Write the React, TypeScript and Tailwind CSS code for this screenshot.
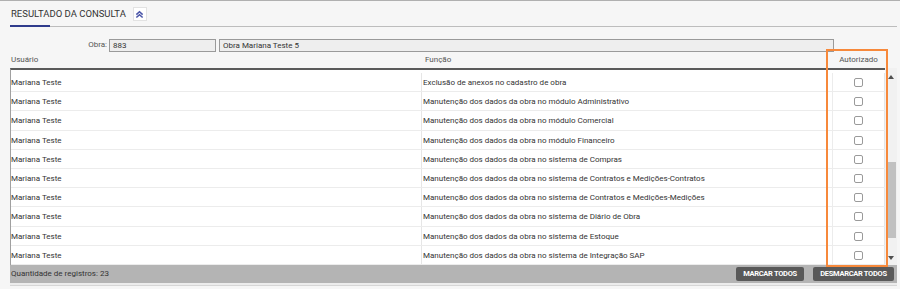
import React from "react";

const funcoes = [
  "Exclusão de anexos no cadastro de obra",
  "Manutenção dos dados da obra no módulo Administrativo",
  "Manutenção dos dados da obra no módulo Comercial",
  "Manutenção dos dados da obra no módulo Financeiro",
  "Manutenção dos dados da obra no sistema de Compras",
  "Manutenção dos dados da obra no sistema de Contratos e Medições-Contratos",
  "Manutenção dos dados da obra no sistema de Contratos e Medições-Medições",
  "Manutenção dos dados da obra no sistema de Diário de Obra",
  "Manutenção dos dados da obra no sistema de Estoque",
  "Manutenção dos dados da obra no sistema de Integração SAP",
];

export default function App() {
  return (
    <div
      className="relative w-[900px] h-[289px] overflow-hidden bg-[#f6f6f6] border-t border-[#b0b0b0] text-[#333]"
      style={{ fontFamily: "Roboto, 'Noto Sans', sans-serif" }}
    >
      {/* Title */}
      <div className="pl-[10px] pr-[3px]">
        <div className="flex items-center h-[24px] pt-[2px]">
          <span className="pl-[1px] text-[9.5px] leading-none text-[#333]">RESULTADO DA CONSULTA</span>
          <div className="ml-[7px] w-[14px] h-[14px] bg-white border border-[#e2e2e2] flex items-center justify-center">
            <svg width="9" height="9" viewBox="0 0 10 10">
              <path d="M1.5 5.2 L5 2 L8.5 5.2" stroke="#4a55a8" strokeWidth="1.7" fill="none" />
              <path d="M1.5 8.4 L5 5.2 L8.5 8.4" stroke="#4a55a8" strokeWidth="1.7" fill="none" />
            </svg>
          </div>
        </div>
        <div className="relative h-[2px] border-b border-[#bdbdbd]">
          <div className="absolute left-0 top-0 w-[40px] h-[2px] bg-[#2f3b8c]" />
        </div>

        {/* Obra row */}
        <div className="flex items-center mt-[11px] h-[14px]">
          <div className="w-[99px] text-right text-[8px] text-[#555] pr-[2px]">Obra:</div>
          <div className="w-[107px] h-[13px] bg-[#eeeeee] border border-[#9a9a9a] text-[8px] leading-[11px] pl-[3px] text-[#333]">883</div>
          <div className="ml-[3px] w-[615px] h-[13px] bg-[#eeeeee] border border-[#9a9a9a] text-[8px] leading-[11px] pl-[3px] text-[#333]">Obra Mariana Teste 5</div>
        </div>

        {/* Header */}
        <div className="flex items-center h-[16px] w-[875px] text-[8px] text-[#555]">
          <div className="w-[411px] pl-[1px]">Usuário</div>
          <div className="w-[411px] pl-[4px]">Função</div>
          <div className="w-[53px] text-center">Autorizado</div>
        </div>

        {/* Body */}
        <div className="flex">
          <div className="w-[875px] bg-white border-l border-[#a0a0a0] border-t-2 border-t-[#5a5a5a]">
            <div className="h-[3px]" />
            {funcoes.map((f, i) => (
              <div key={i} className="flex h-[19.2px] border-b border-[#ececec] text-[8px] text-[#333]">
                <div className="w-[410px] flex items-center pt-[2px]">Mariana Teste</div>
                <div className="w-[411px] flex items-center pt-[2px] pl-[1px] border-l border-[#e6e6e6]">{f}</div>
                <div className="w-[53px] flex items-center justify-center pt-[1px] border-l border-[#ececec] border-r border-r-[#e6e6e6]">
                  <div className="w-[9px] h-[9px] border border-[#9a9a9a] rounded-[2px] bg-white" />
                </div>
              </div>
            ))}
          </div>
          {/* Scrollbar */}
          <div className="w-[12px] bg-[#f1f1f1] flex flex-col items-center">
            <div className="h-[10px] mt-[4px] flex items-center justify-center">
              <svg width="6" height="4" viewBox="0 0 6 4"><path d="M0 4 L3 0 L6 4 Z" fill="#505050" /></svg>
            </div>
            <div className="mt-[80px] w-[10px] h-[76px] bg-[#c1c1c1]" />
            <div className="mt-[18px] flex items-center justify-center">
              <svg width="6" height="4" viewBox="0 0 6 4"><path d="M0 0 L3 4 L6 0 Z" fill="#505050" /></svg>
            </div>
          </div>
        </div>

        {/* Footer */}
        <div className="flex items-center h-[18px] bg-[#b4b4b4] w-[887px]">
          <div className="flex-1 pl-[1px] text-[8px] text-[#333]">Quantidade de registros: 23</div>
          <div className="h-[14px] w-[68px] flex items-center justify-center bg-[#595959] rounded-[2px] text-white text-[7.5px] font-bold tracking-[-0.3px]">MARCAR TODOS</div>
          <div className="ml-[9px] mr-[3px] h-[14px] w-[81px] flex items-center justify-center bg-[#595959] rounded-[2px] text-white text-[7.5px] font-bold tracking-[-0.3px]">DESMARCAR TODOS</div>
        </div>
        <div className="h-[3px] border-b border-[#d6d6d6] bg-[#ececec]" />
      </div>

      {/* Orange highlight */}
      <div className="absolute left-[826px] top-[48px] w-[62px] h-[218px] border-2 border-[#f7893b]" />
    </div>
  );
}
